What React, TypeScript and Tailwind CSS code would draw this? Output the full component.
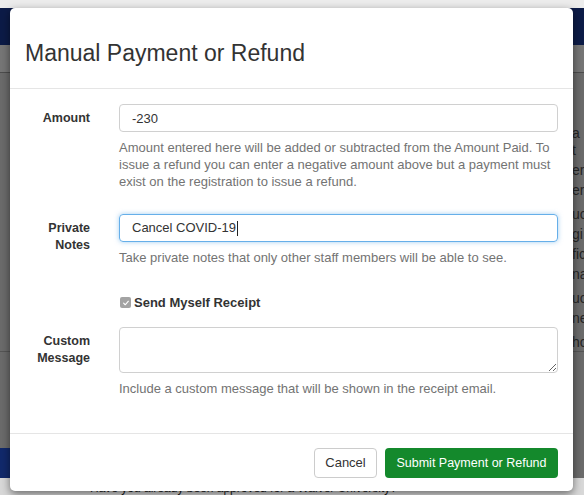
import React from "react";

const font = { fontFamily: '"Liberation Sans", Arial, sans-serif' };

const Label: React.FC<{ children: React.ReactNode }> = ({ children }) => (
    <div className="w-[65px] shrink-0 pt-[6px] text-right text-[12.5px] leading-[17px] font-bold text-[#333]">
        {children}
    </div>
);

const Help: React.FC<{ children: React.ReactNode }> = ({ children }) => (
    <p className="mt-[7px] text-[13px] leading-[17px] text-[#737373]">{children}</p>
);

const App: React.FC = () => {
    return (
        <div className="relative h-[495px] w-[584px] overflow-hidden" style={font}>
            {/**dimmed page behind the modal */}
            <div className="flex h-full flex-col bg-[#6b6b6b]">
                <div className="h-[8px] bg-[#ececec]" />
                <div className="h-[39px] bg-[#0c1b47]" />
                <div className="h-[30px] border-b border-[#4d4d4d] bg-[#767676]" />
                <div className="flex h-[278px] flex-col gap-[3px] pl-[572px] pt-[52px] text-[14px] leading-[17px] text-[#262626]">
                    <p>a t</p>
                    <p>er</p>
                    <p>er</p>
                    <p className="mt-[4px]">uc</p>
                    <p>gi</p>
                    <p>fic</p>
                    <p>na</p>
                    <p className="mt-[4px]">uc</p>
                    <p>ne</p>
                    <p className="mt-[4px]">hc</p>
                    <p>ne</p>
                </div>
                <div className="h-[102px] border-t border-[#555] bg-[#6b6b6b]" />
                <div className="h-[31px] w-[300px] bg-[#11296b]" />
                <div className="flex-1 bg-[#d8d8d8] pl-[90px] pt-[3px] text-[12px] leading-[14px] text-[#222]">
                    Have you already been approved for a Waiver University?
                </div>
            </div>

            {/**modal */}
            <div className="absolute left-[10px] top-[8px] flex h-[483px] w-[563px] flex-col rounded-[5px] bg-white shadow-[0_3px_9px_rgba(0,0,0,0.5)]">
                <div className="h-[81px] shrink-0 border-b border-[#e5e5e5] pl-[15px] pt-[32px]">
                    <h1 className="text-[23px] leading-[26px] font-normal text-[#333]">Manual Payment or Refund</h1>
                </div>

                <div className="flex flex-1 flex-col px-[15px] pt-[15px]">
                    {/**Amount */}
                    <div className="flex gap-[29px]">
                        <Label>Amount</Label>
                        <div className="flex-1">
                            <input
                                readOnly
                                value="-230"
                                className="h-[28px] w-full rounded-[4px] border border-[#d0d0d0] px-[12px] text-[13px] text-[#333] outline-none"
                            />
                            <Help>
                                Amount entered here will be added or subtracted from the Amount Paid. To issue a refund
                                you can enter a negative amount above but a payment must exist on the registration to
                                issue a refund.
                            </Help>
                        </div>
                    </div>

                    {/**Private notes */}
                    <div className="mt-[24px] flex gap-[29px]">
                        <Label>Private Notes</Label>
                        <div className="flex-1">
                            <div className="flex h-[28px] w-full items-center rounded-[4px] border border-[#66afe9] px-[12px] text-[13px] text-[#333] shadow-[0_0_5px_rgba(102,175,233,0.6)]">
                                Cancel COVID-19
                                <span className="ml-[1px] inline-block h-[15px] w-[1px] bg-[#222]" />
                            </div>
                            <Help>Take private notes that only other staff members will be able to see.</Help>
                        </div>
                    </div>

                    {/**Send receipt */}
                    <div className="mt-[28px] flex gap-[29px]">
                        <div className="w-[65px] shrink-0" />
                        <div className="flex h-[17px] items-center gap-[3px] pl-[1px]">
                            <span className="flex h-[11px] w-[11px] items-center justify-center rounded-[2px] bg-[#a3a3a3]">
                                <svg viewBox="0 0 10 10" className="h-[8px] w-[8px]">
                                    <path d="M2 5.2 L4 7.2 L8 2.8" fill="none" stroke="#fff" strokeWidth="1.4" strokeLinecap="round" strokeLinejoin="round" />
                                </svg>
                            </span>
                            <span className="text-[13px] font-bold text-[#333]">Send Myself Receipt</span>
                        </div>
                    </div>

                    {/**Custom message */}
                    <div className="mt-[16px] flex gap-[29px]">
                        <Label>Custom Message</Label>
                        <div className="flex-1">
                            <textarea
                                readOnly
                                className="block h-[46px] w-full rounded-[4px] border border-[#d0d0d0] px-[12px] py-[6px] text-[13px] outline-none"
                            />
                            <Help>Include a custom message that will be shown in the receipt email.</Help>
                        </div>
                    </div>
                </div>

                {/**footer */}
                <div className="flex h-[58px] shrink-0 justify-end gap-[8px] border-t border-[#e5e5e5] px-[15px] pt-[14px]">
                    <button className="h-[30px] w-[63px] rounded-[4px] border border-[#cccccc] bg-white text-[13px] text-[#333]">
                        Cancel
                    </button>
                    <button className="h-[30px] w-[173px] rounded-[4px] bg-[#14892c] text-[12.5px] text-white">
                        Submit Payment or Refund
                    </button>
                </div>
            </div>
        </div>
    );
};

export default App;
